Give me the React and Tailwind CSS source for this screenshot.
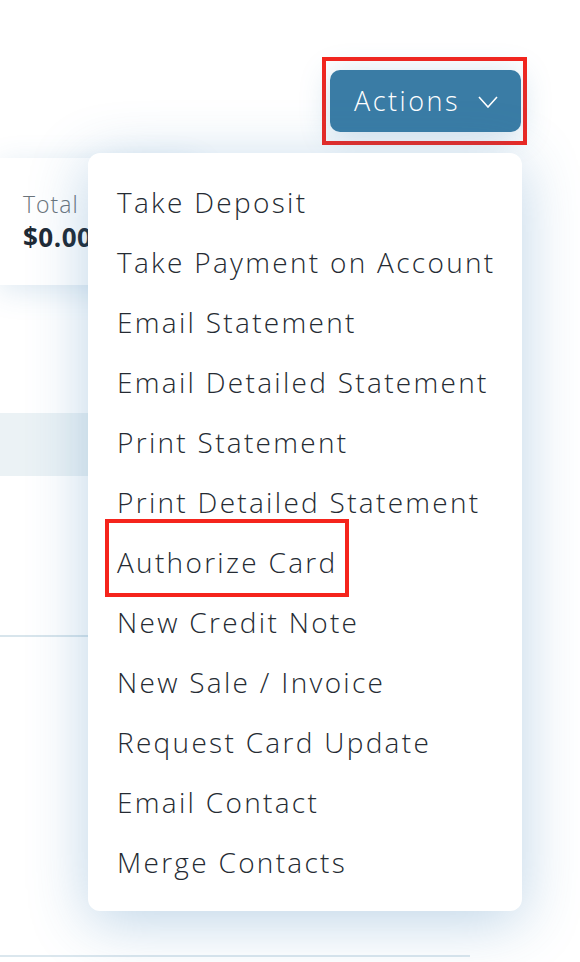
const menuItems = [
  'Take Deposit',
  'Take Payment on Account',
  'Email Statement',
  'Email Detailed Statement',
  'Print Statement',
  'Print Detailed Statement',
  'Authorize Card',
  'New Credit Note',
  'New Sale / Invoice',
  'Request Card Update',
  'Email Contact',
  'Merge Contacts',
];

export default function App() {
  return (
    <div
      className="relative w-[580px] h-[962px] overflow-hidden bg-white text-[#2a3038]"
      style={{ fontFamily: '"Open Sans", "Noto Sans", sans-serif' }}
    >
      {/* page content behind the menu */}
      <div className="flex flex-col">
        {/* header row with Actions button */}
        <div className="flex justify-end pt-[57px] pr-[53px] h-[145px]">
          <div className="border-4 border-[#f5241c] pl-1 pr-0.5 py-[9px]">
            <button className="flex items-center gap-[18px] h-[62px] w-[191px] pl-6 rounded-[10px] bg-[#3a7ca5] text-white text-[27px] font-light tracking-[2.5px] shadow-[0_4px_30px_rgba(60,130,180,0.25)]">
              <span>Actions</span>
              <svg width="20" height="12" viewBox="0 0 20 12" fill="none" stroke="currentColor" strokeWidth="1.6" className="mt-0.5">
                <polyline points="1,1 10,11 19,1" />
              </svg>
            </button>
          </div>
        </div>

        {/* summary card */}
        <div className="mt-[13px] w-[200px] h-[127px] bg-white rounded-r-xl shadow-[0_6px_30px_rgba(60,130,180,0.18)] pl-[23px] pt-[30px]">
          <div className="text-[23px] leading-[32px] font-light tracking-[1px] text-[#6b747b]">Total</div>
          <div className="text-[26px] leading-[34px] font-bold tracking-[0.5px] text-[#1f2a35]">$0.00</div>
        </div>

        {/* table header */}
        <div className="mt-[128px] w-[470px] h-[63px] bg-[#ebf2f5]" />
        <div className="w-[470px] h-[161px] border-b-2 border-[#d8e5ec]" />
        <div className="w-[470px] h-[320px] border-b-2 border-[#dbe7ee]" />
      </div>

      {/* dropdown menu */}
      <div className="absolute left-[88px] top-[153px] w-[434px] rounded-[12px] bg-white py-[19px] shadow-[0_10px_60px_rgba(50,120,180,0.32)]">
        {menuItems.map((item) => (
          <div key={item} className="relative flex items-center h-[60px] pl-[29px] text-[28px] font-light tracking-[2.3px] text-[#252b33]">
            <span>{item}</span>
            {item === 'Authorize Card' && (
              <div className="absolute left-[17px] top-[-13px] w-[244px] h-[78px] border-4 border-[#f5241c]" />
            )}
          </div>
        ))}
      </div>
    </div>
  );
}
